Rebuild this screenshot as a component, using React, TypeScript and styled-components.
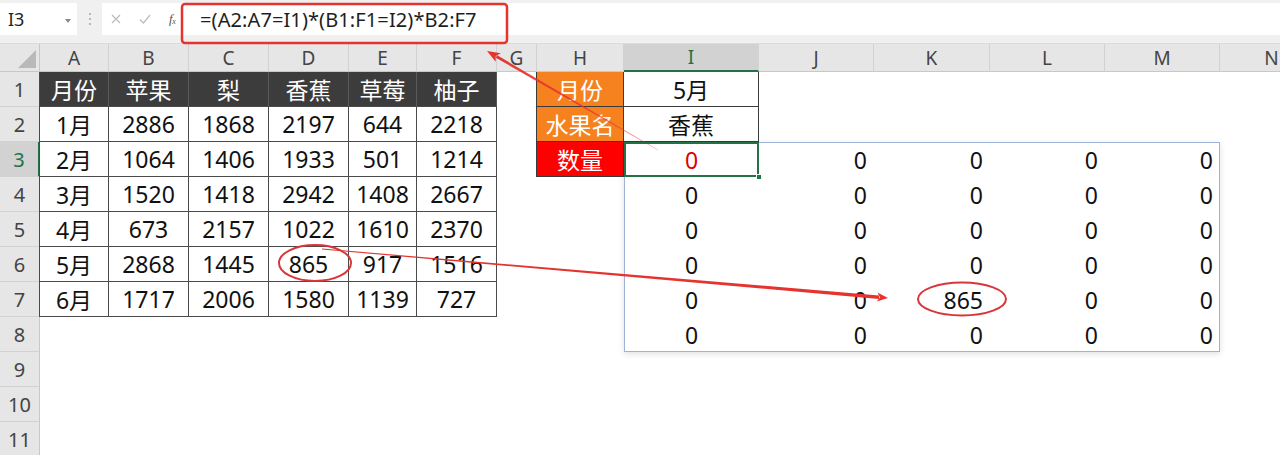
import React from "react";
import styled, { createGlobalStyle, css } from "styled-components";

const GREEN = "#217346";
const ANNO = "#e5332e";

const GlobalStyle = createGlobalStyle`
  html, body { margin: 0; padding: 0; background: #ffffff; }
  body { font-family: "Noto Sans", "Noto Sans CJK SC", sans-serif; }
  * { box-sizing: border-box; }
`;

const Page = styled.div`
  position: relative;
  width: 1280px;
  height: 455px;
  overflow: hidden;
  background: #ffffff;
`;

/* ---------- Formula bar ---------- */
const FormulaBar = styled.div`
  display: flex;
  align-items: flex-start;
  height: 44px;
  padding-top: 3px;
  background: #f0f0f0;
  border-bottom: 1px solid #dcdcdc;
`;

const NameBox = styled.div`
  position: relative;
  width: 77px;
  height: 32px;
  background: #ffffff;
  display: flex;
  align-items: center;
  padding-left: 8px;
  font-size: 18px;
  color: #222;
`;

const DropArrow = styled.span`
  position: absolute;
  right: 6px;
  top: 16px;
  width: 0;
  height: 0;
  border-left: 3px solid transparent;
  border-right: 3px solid transparent;
  border-top: 4px solid #8a8a8a;
`;

const Grip = styled.div`
  width: 25px;
  height: 32px;
  display: flex;
  flex-direction: column;
  align-items: center;
  justify-content: center;
  gap: 3px;
`;

const GripDot = styled.span`
  width: 2px;
  height: 2px;
  background: #b8b8b8;
`;

const FormulaBox = styled.div`
  flex: 1;
  height: 32px;
  background: #ffffff;
  display: flex;
  align-items: center;
`;

const BarIcons = styled.div`
  display: flex;
  align-items: center;
  width: 98px;
  padding-left: 9px;
  gap: 18px;
`;

const FxLabel = styled.span`
  font-family: "Liberation Serif", serif;
  font-style: italic;
  font-size: 13px;
  color: #555;
  letter-spacing: -0.5px;
  & sub { font-size: 8px; vertical-align: -1px; }
`;

const FormulaText = styled.div`
  font-size: 20px;
  color: #1e1e1e;
  letter-spacing: 0.1px;
`;

/* ---------- Sheet ---------- */
const colWidths = [40, 69, 80, 80, 80, 68, 80, 40, 87, 135, 115, 116, 115, 115, 104];
const colNames = ["A", "B", "C", "D", "E", "F", "G", "H", "I", "J", "K", "L", "M", "N"];

const Sheet = styled.div`
  display: grid;
  grid-template-columns: ${colWidths.map((w) => `${w}px`).join(" ")};
  grid-template-rows: 28px repeat(11, 35px);
`;

const Corner = styled.div`
  grid-column: 1;
  grid-row: 1;
  background: #e6e6e6;
  border-right: 1px solid #c8c8c8;
  border-bottom: 1px solid #c8c8c8;
  display: flex;
  align-items: flex-end;
  justify-content: flex-end;
  padding: 0 3px 3px 0;
`;

const ColHeader = styled.div<{ $col: number; $sel?: boolean }>`
  grid-column: ${(p) => p.$col};
  grid-row: 1;
  display: flex;
  align-items: center;
  justify-content: center;
  font-size: 19px;
  color: #444;
  background: #e6e6e6;
  border-right: 1px solid #d2d2d2;
  border-bottom: 1px solid #c8c8c8;
  ${(p) =>
    p.$sel &&
    css`
      background: #d2d2d2;
      color: ${GREEN};
      border-bottom: 2px solid ${GREEN};
    `}
`;

const RowHeader = styled.div<{ $row: number; $sel?: boolean }>`
  grid-column: 1;
  grid-row: ${(p) => p.$row + 1};
  display: flex;
  align-items: center;
  justify-content: center;
  font-size: 20px;
  color: #444;
  background: #e6e6e6;
  border-right: 1px solid #c8c8c8;
  border-bottom: 1px solid #d2d2d2;
  ${(p) =>
    p.$sel &&
    css`
      background: #d2d2d2;
      color: ${GREEN};
      border-right: 2px solid ${GREEN};
    `}
`;

const cellText = css`
  display: flex;
  align-items: center;
  font-size: 23px;
  color: #111;
  white-space: nowrap;
`;

/* data table A1:F7 */
const DataTable = styled.div`
  grid-column: 2 / 8;
  grid-row: 2 / 9;
  display: grid;
  grid-template-columns: 69px 80px 80px 80px 68px 80px;
  grid-auto-rows: 35px;
  box-shadow: -1px 0 0 #4a4a4a;
`;

const DataCell = styled.div<{ $head?: boolean }>`
  ${cellText};
  justify-content: center;
  border-right: 1px solid #4a4a4a;
  border-bottom: 1px solid #4a4a4a;
  ${(p) =>
    p.$head &&
    css`
      background: #3c3c3c;
      color: #ffffff;
      border-right-color: #5a5a5a;
    `}
`;

/* lookup block H1:I3 */
const LookupTable = styled.div`
  grid-column: 9 / 11;
  grid-row: 2 / 4;
  display: grid;
  grid-template-columns: 87px 135px;
  grid-auto-rows: 35px;
  box-shadow: -1px 0 0 #3a3a3a;
`;

const LabelCell = styled.div<{ $tone: "orange" | "red" }>`
  ${cellText};
  justify-content: center;
  color: #ffffff;
  background: ${(p) => (p.$tone === "orange" ? "#f5821f" : "#ff0000")};
  border-right: 1px solid #3a3a3a;
  border-bottom: 1px solid #3a3a3a;
`;

const ValueCell = styled.div`
  ${cellText};
  justify-content: center;
  border-right: 1px solid #3a3a3a;
  border-bottom: 1px solid #3a3a3a;
`;

const QtyLabel = styled(LabelCell)`
  grid-column: 9;
  grid-row: 4;
  box-shadow: -1px 0 0 #3a3a3a;
`;

/* spill range I3:M8 */
const SpillRange = styled.div`
  grid-column: 10 / 15;
  grid-row: 4 / 10;
  display: grid;
  grid-template-columns: 135px 115px 116px 115px 115px;
  grid-auto-rows: 35px;
  outline: 1px solid #9fb3d8;
  outline-offset: -1px;
  box-shadow: 0 2px 6px rgba(0, 0, 0, 0.12);
`;

const SpillCell = styled.div<{ $center?: boolean; $red?: boolean }>`
  ${cellText};
  justify-content: ${(p) => (p.$center ? "center" : "flex-end")};
  padding-right: ${(p) => (p.$center ? "0" : "7px")};
  color: ${(p) => (p.$red ? "#e00000" : "#111")};
`;

const ActiveCell = styled(SpillCell)`
  position: relative;
  z-index: 1;
  box-shadow: inset 0 0 0 2px ${GREEN};
`;

const FillHandle = styled.span`
  position: absolute;
  right: -3px;
  bottom: -3px;
  width: 6px;
  height: 6px;
  background: ${GREEN};
  border: 1px solid #ffffff;
`;

/* annotations overlay */
const Overlay = styled.svg`
  position: absolute;
  left: 0;
  top: 0;
  pointer-events: none;
`;

type Pt = [number, number];

function arrowShapes(tail: Pt, tip: Pt, w1: number, w2: number, hl: number, hw: number) {
  const dx = tip[0] - tail[0];
  const dy = tip[1] - tail[1];
  const L = Math.hypot(dx, dy);
  const ux = dx / L;
  const uy = dy / L;
  const nx = -uy;
  const ny = ux;
  const bx = tip[0] - ux * hl;
  const by = tip[1] - uy * hl;
  const f = (p: number[][]) => p.map((q) => `${q[0].toFixed(1)},${q[1].toFixed(1)}`).join(" ");
  const shaft = f([
    [tail[0] + (nx * w1) / 2, tail[1] + (ny * w1) / 2],
    [bx + ux * 2 + (nx * w2) / 2, by + uy * 2 + (ny * w2) / 2],
    [bx + ux * 2 - (nx * w2) / 2, by + uy * 2 - (ny * w2) / 2],
    [tail[0] - (nx * w1) / 2, tail[1] - (ny * w1) / 2],
  ]);
  const head = f([
    [tip[0], tip[1]],
    [bx + (nx * hw) / 2, by + (ny * hw) / 2],
    [bx + ux * 3, by + uy * 3],
    [bx - (nx * hw) / 2, by - (ny * hw) / 2],
  ]);
  return { shaft, head };
}

const header = ["月份", "苹果", "梨", "香蕉", "草莓", "柚子"];
const rows: (string | number)[][] = [
  ["1月", 2886, 1868, 2197, 644, 2218],
  ["2月", 1064, 1406, 1933, 501, 1214],
  ["3月", 1520, 1418, 2942, 1408, 2667],
  ["4月", 673, 2157, 1022, 1610, 2370],
  ["5月", 2868, 1445, 865, 917, 1516],
  ["6月", 1717, 2006, 1580, 1139, 727],
];

const spill = Array.from({ length: 6 }, (_, r) =>
  Array.from({ length: 5 }, (_, c) => (r === 4 && c === 2 ? 865 : 0))
);

export default function App() {
  const a1 = arrowShapes([658, 150], [487, 51], 0.6, 2.8, 13, 10);
  const a2 = arrowShapes([322, 249], [888, 298], 0.9, 3.6, 11, 9);

  return (
    <Page>
      <GlobalStyle />
      <FormulaBar>
        <NameBox>
          I3
          <DropArrow />
        </NameBox>
        <Grip>
          <GripDot />
          <GripDot />
          <GripDot />
        </Grip>
        <FormulaBox>
          <BarIcons>
            <svg width="10" height="10" viewBox="0 0 10 10">
              <path d="M1 1 L9 9 M9 1 L1 9" stroke="#bdbdbd" strokeWidth="1.3" fill="none" />
            </svg>
            <svg width="12" height="10" viewBox="0 0 12 10">
              <path d="M1 5.5 L4.5 9 L11 1" stroke="#bdbdbd" strokeWidth="1.3" fill="none" />
            </svg>
            <FxLabel>
              f<sub>x</sub>
            </FxLabel>
          </BarIcons>
          <FormulaText>=(A2:A7=I1)*(B1:F1=I2)*B2:F7</FormulaText>
        </FormulaBox>
      </FormulaBar>

      <Sheet>
        <Corner>
          <svg width="18" height="18" viewBox="0 0 18 18">
            <polygon points="18,0 18,18 0,18" fill="#b9b9b9" />
          </svg>
        </Corner>
        {colNames.map((c, i) => (
          <ColHeader key={c} $col={i + 2} $sel={c === "I"}>
            {c}
          </ColHeader>
        ))}
        {Array.from({ length: 11 }, (_, i) => (
          <RowHeader key={i} $row={i + 1} $sel={i + 1 === 3}>
            {i + 1}
          </RowHeader>
        ))}

        <DataTable>
          {header.map((h) => (
            <DataCell key={h} $head>
              {h}
            </DataCell>
          ))}
          {rows.map((r, ri) =>
            r.map((v, ci) => <DataCell key={`${ri}-${ci}`}>{v}</DataCell>)
          )}
        </DataTable>

        <LookupTable>
          <LabelCell $tone="orange">月份</LabelCell>
          <ValueCell>5月</ValueCell>
          <LabelCell $tone="orange">水果名</LabelCell>
          <ValueCell>香蕉</ValueCell>
        </LookupTable>
        <QtyLabel $tone="red">数量</QtyLabel>

        <SpillRange>
          {spill.map((r, ri) =>
            r.map((v, ci) =>
              ri === 0 && ci === 0 ? (
                <ActiveCell key="active" $center $red>
                  {v}
                  <FillHandle />
                </ActiveCell>
              ) : (
                <SpillCell key={`${ri}-${ci}`} $center={ci === 0}>
                  {v}
                </SpillCell>
              )
            )
          )}
        </SpillRange>
      </Sheet>

      <Overlay width="1280" height="455" viewBox="0 0 1280 455">
        <defs>
          <linearGradient id="fade1" gradientUnits="userSpaceOnUse" x1="658" y1="150" x2="487" y2="51">
            <stop offset="0" stopColor={ANNO} stopOpacity="0.35" />
            <stop offset="0.5" stopColor={ANNO} stopOpacity="0.85" />
            <stop offset="1" stopColor={ANNO} stopOpacity="1" />
          </linearGradient>
        </defs>
        <rect x="182" y="4" width="325" height="39" rx="3" fill="none" stroke={ANNO} strokeWidth="2.5" />
        <polygon points={a1.shaft} fill="url(#fade1)" />
        <polygon points={a1.head} fill={ANNO} />
        <ellipse cx="315" cy="263" rx="36" ry="18" fill="none" stroke="#d8363a" strokeWidth="2" />
        <polygon points={a2.shaft} fill={ANNO} />
        <polygon points={a2.head} fill={ANNO} />
        <ellipse cx="962" cy="299" rx="44" ry="16.5" fill="none" stroke="#d8363a" strokeWidth="2" />
      </Overlay>
    </Page>
  );
}
